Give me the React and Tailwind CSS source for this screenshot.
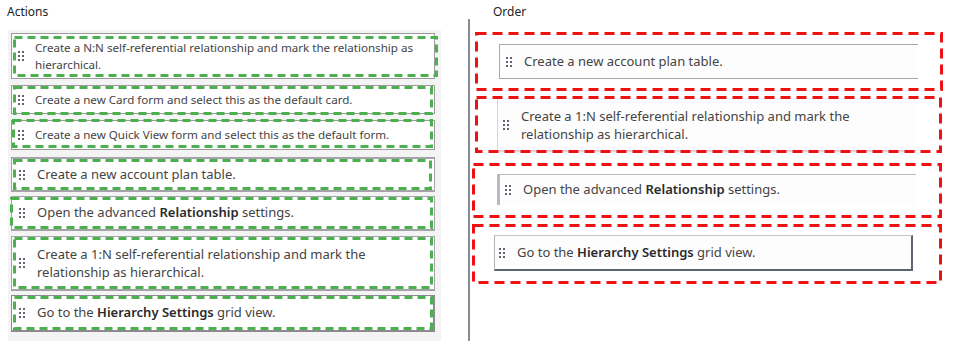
import React from 'react';

const font = { fontFamily: '"Segoe UI", "Noto Sans", Arial, sans-serif' };

// six-dot drag handle
function Handle({ className = '' }) {
  return (
    <svg width="6" height="10" viewBox="0 0 6 10" className={`shrink-0 ${className}`}>
      <rect x="0" y="0" width="2" height="2" fill="#5f6470" />
      <rect x="4" y="0" width="2" height="2" fill="#5f6470" />
      <rect x="0" y="4" width="2" height="2" fill="#5f6470" />
      <rect x="4" y="4" width="2" height="2" fill="#5f6470" />
      <rect x="0" y="8" width="2" height="2" fill="#5f6470" />
      <rect x="4" y="8" width="2" height="2" fill="#5f6470" />
    </svg>
  );
}

// dashed annotation outline drawn over a box
function Dashed({ color, dash, className = '' }) {
  return (
    <svg className={`absolute pointer-events-none overflow-visible ${className}`}>
      <rect
        x="1.5"
        y="1.5"
        className="w-[calc(100%-3px)] h-[calc(100%-3px)]"
        fill="none"
        stroke={color}
        strokeWidth="3"
        strokeDasharray={dash}
      />
    </svg>
  );
}

const actions = [
  {
    text: <>Create a N:N self-referential relationship and mark the relationship as hierarchical.</>,
    box: 'mt-[3px] h-[46px] text-[11.6px] leading-[17px] pl-[6px] pr-[14px] border border-[#9a9a9a]',
    gap: 'gap-[11px]',
    dash: '-right-[4px] left-[1px] top-[2px] bottom-[1px] w-[calc(100%+3px)] h-[calc(100%-3px)]',
  },
  {
    text: <>Create a new Card form and select this as the default card.</>,
    box: 'mt-[6px] h-[29px] text-[11.6px] pl-[6px] border border-[#9a9a9a]',
    gap: 'gap-[11px]',
    dash: 'left-[1px] top-[0px] w-[calc(100%-2px)] h-[calc(100%+2px)]',
  },
  {
    text: <>Create a new Quick View form and select this as the default form.</>,
    box: 'mt-[6px] h-[30px] text-[11.6px] pl-[6px] border border-[#9a9a9a]',
    gap: 'gap-[11px]',
    dash: 'left-[0px] -top-[2px] w-[calc(100%-1px)] h-[calc(100%+1px)]',
  },
  {
    text: <>Create a new account plan table.</>,
    box: 'mt-[7px] h-[35px] text-[13px] pl-[7px] border border-[#a4a4a8] border-t-2 border-b-2',
    gap: 'gap-[12px]',
    dash: 'left-[1px] top-[0px] w-[calc(100%-3px)] h-full',
  },
  {
    text: <>Open the advanced <b className="font-semibold text-[#2a2a2a]">Relationship</b> settings.</>,
    box: 'mt-[4px] h-[35px] text-[13px] pl-[7px] border border-[#a4a4a8] border-b-2',
    gap: 'gap-[12px]',
    dash: '-left-[2px] top-[0px] w-[calc(100%+1px)] h-full',
  },
  {
    text: <>Create a 1:N self-referential relationship and mark the relationship as hierarchical.</>,
    box: 'mt-[5px] h-[55px] text-[13px] leading-[18px] pl-[7px] pr-[60px] border border-[#a4a4a8] border-b-2',
    gap: 'gap-[12px]',
    dash: 'left-[1px] top-[0px] w-[calc(100%-2px)] h-full',
  },
  {
    text: <>Go to the <b className="font-semibold text-[#2a2a2a]">Hierarchy Settings</b> grid view.</>,
    box: 'mt-[4px] h-[37px] text-[13px] pl-[7px] border border-[#8a8a90] border-b-2 border-r-2',
    gap: 'gap-[12px]',
    dash: 'left-[1px] top-[0px] w-[calc(100%-1px)] h-full',
  },
];

const order = [
  {
    text: <>Create a new account plan table.</>,
    outer: 'mt-[13px] ml-[5px] w-[468px] h-[59px]',
    inner: 'ml-[21px] mt-[9px] h-[35px] border-t border-b border-l border-[#a8a8b0] pl-[6px]',
    gap: 'gap-[12px]',
  },
  {
    text: <>Create a 1:N self-referential relationship and mark the relationship as hierarchical.</>,
    outer: 'mt-[5px] ml-[5px] w-[467px] h-[57px]',
    inner: 'ml-[19px] mt-[0px] h-[53px] border-l border-b-2 border-[#d4d6da] pl-[5px] pr-[60px] leading-[18px]',
    gap: 'gap-[12px]',
  },
  {
    text: <>Open the advanced <b className="font-semibold text-[#2a2a2a]">Relationship</b> settings.</>,
    outer: 'mt-[10px] ml-[2px] w-[470px] h-[55px]',
    inner: 'ml-[22px] mt-[8px] h-[31px] border-t border-l-[3px] border-[#b8bac0] pl-[5px]',
    gap: 'gap-[12px]',
  },
  {
    text: <>Go to the <b className="font-semibold text-[#2a2a2a]">Hierarchy Settings</b> grid view.</>,
    outer: 'mt-[6px] ml-[2px] w-[470px] h-[60px]',
    inner: 'ml-[19px] mt-[8px] h-[36px] border border-t-[#c4c6cc] border-l-[#b0b2b8] border-r-2 border-b-2 border-r-[#5c6270] border-b-[#5c6270] pl-[4px]',
    gap: 'gap-[12px]',
  },
];

export default function App() {
  return (
    <div className="w-[971px] h-[341px] bg-white flex overflow-hidden text-[#444]" style={font}>
      {/* Actions column */}
      <div className="w-[468px] flex flex-col">
        <div className="pl-[7px] pt-[3px] h-[30px] text-[12px] text-[#222]">Actions</div>
        <div className="ml-[8px] w-[433px] flex-1 bg-[#f4f4f5] pl-[3px] pr-[6px] flex flex-col">
          {actions.map((a, i) => (
            <div key={i} className={`relative bg-white flex items-center ${a.gap} ${a.box}`}>
              <Handle />
              <div>{a.text}</div>
              <Dashed color="#4caf50" dash="8 5" className={a.dash} />
            </div>
          ))}
        </div>
      </div>

      {/* Order column */}
      <div className="flex-1 flex flex-col">
        <div className="pl-[25px] pt-[3px] h-[19px] text-[12px] text-[#222]">Order</div>
        <div className="flex-1 border-l-2 border-[#878c96] flex flex-col text-[13px]">
          {order.map((o, i) => (
            <div key={i} className={`relative p-[3px] ${o.outer}`}>
              <div className={`w-[419px] bg-[#fdfdfd] flex items-center ${o.gap} ${o.inner}`}>
                <Handle />
                <div>{o.text}</div>
              </div>
              <Dashed color="#ee1111" dash="10 6" className="inset-0 w-full h-full" />
            </div>
          ))}
        </div>
      </div>
    </div>
  );
}
